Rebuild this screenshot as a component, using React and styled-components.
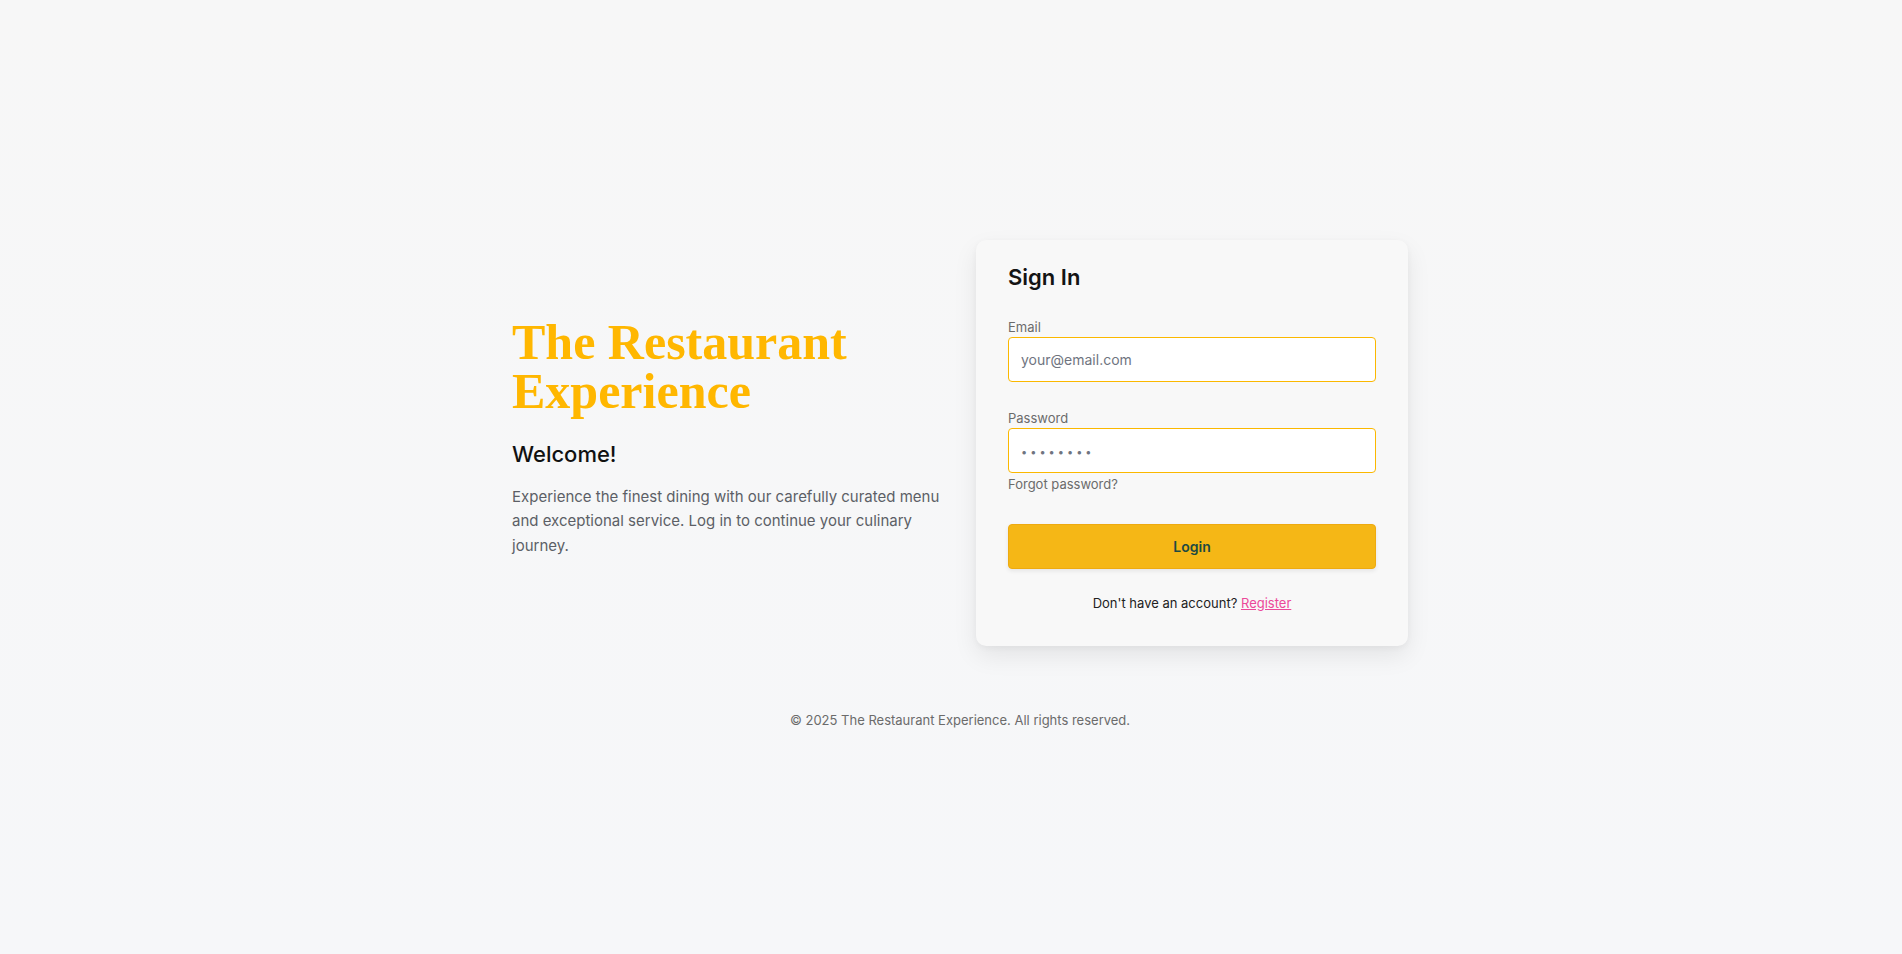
import React from "react";
import styled, { createGlobalStyle } from "styled-components";

const GlobalStyle = createGlobalStyle`
  * { box-sizing: border-box; }
  body {
    margin: 0;
    background: #f7f8f8;
    font-family: Inter, "Open Sans", sans-serif;
    color: #111827;
  }
`;

const App = () => {
  return (
    <>
      <GlobalStyle />
      <Page>
        <Content>
          <Intro>
            <Title>The Restaurant Experience</Title>
            <Welcome>Welcome!</Welcome>
            <Lead>
              Experience the finest dining with our carefully curated menu and
              exceptional service. Log in to continue your culinary journey.
            </Lead>
          </Intro>
          <Card>
            <CardTitle>Sign In</CardTitle>
            <Field>
              <Label>Email</Label>
              <Input type="email" placeholder="your@email.com" />
            </Field>
            <Field $last>
              <Label>Password</Label>
              <Input type="text" placeholder="••••••••" $dots />
              <Forgot href="#">Forgot password?</Forgot>
            </Field>
            <Button type="button">Login</Button>
            <Switch>
              Don't have an account? <a href="#">Register</a>
            </Switch>
          </Card>
        </Content>
        <Footer>© 2025 The Restaurant Experience. All rights reserved.</Footer>
      </Page>
    </>
  );
};

export default App;

const Page = styled.div`
  min-height: 100vh;
  display: flex;
  flex-direction: column;
  align-items: center;
  padding: 240px 0 0 18px;
  background: linear-gradient(180deg, #f7f7f7 0%, #f6f7f9 100%);
`;

const Content = styled.main`
  width: 896px;
  display: grid;
  grid-template-columns: 1fr 432px;
  gap: 32px;
  align-items: center;
`;

const Intro = styled.section`
  display: flex;
  flex-direction: column;
  padding-bottom: 10px;
`;

const Title = styled.h1`
  margin: 0 0 24px;
  width: 340px;
  font-family: "Liberation Serif", "DejaVu Serif", serif;
  font-weight: 700;
  font-size: 50px;
  line-height: 49px;
  color: #ffb700;
`;

const Welcome = styled.h2`
  margin: 0 0 17px;
  font-size: 22px;
  font-weight: 500;
  line-height: 28px;
  color: #111111;
`;

const Lead = styled.p`
  margin: 0;
  font-size: 15px;
  line-height: 24.2px;
  color: #5c5f66;
`;

const Card = styled.section`
  background: #f8f8f8;
  border-radius: 10px;
  padding: 22px 32px 33px;
  box-shadow: 0 10px 24px rgba(0, 0, 0, 0.08), 0 2px 6px rgba(0, 0, 0, 0.04);
  display: flex;
  flex-direction: column;
`;

const CardTitle = styled.h3`
  margin: 0 0 26px;
  font-size: 22px;
  line-height: 30px;
  font-weight: 600;
  color: #141414;
`;

const Field = styled.div`
  display: flex;
  flex-direction: column;
  margin-bottom: ${(p) => (p.$last ? "31px" : "27px")};
`;

const Label = styled.label`
  font-size: 13px;
  line-height: 18px;
  color: #6b6b6b;
  margin-bottom: 1px;
`;

const Input = styled.input`
  height: 45px;
  width: 100%;
  border: 1px solid #fbb800;
  border-radius: 4px;
  background: #ffffff;
  padding: 0 12px;
  font-family: inherit;
  font-size: 14px;
  color: #111;
  outline: none;

  &::placeholder {
    color: #6f7480;
    letter-spacing: ${(p) => (p.$dots ? "3px" : "0")};
    font-size: ${(p) => (p.$dots ? "11px" : "14px")};
  }
`;

const Forgot = styled.a`
  margin-top: 2px;
  font-size: 13px;
  line-height: 18px;
  color: #6b6b6b;
  text-decoration: none;
`;

const Button = styled.button`
  height: 45px;
  border: 1px solid #eeaa10;
  border-radius: 4px;
  background: #f5b716;
  color: #1d4a42;
  font-family: inherit;
  font-size: 14px;
  font-weight: 600;
  box-shadow: 0 2px 4px rgba(0, 0, 0, 0.08);
  cursor: pointer;
`;

const Switch = styled.p`
  margin: 24px 0 0;
  text-align: center;
  font-size: 13px;
  line-height: 20px;
  color: #222;

  a {
    color: #ec4899;
    text-decoration: underline;
  }
`;

const Footer = styled.footer`
  margin-top: 64px;
  font-size: 13px;
  line-height: 20px;
  color: #6b6b6b;
`;
